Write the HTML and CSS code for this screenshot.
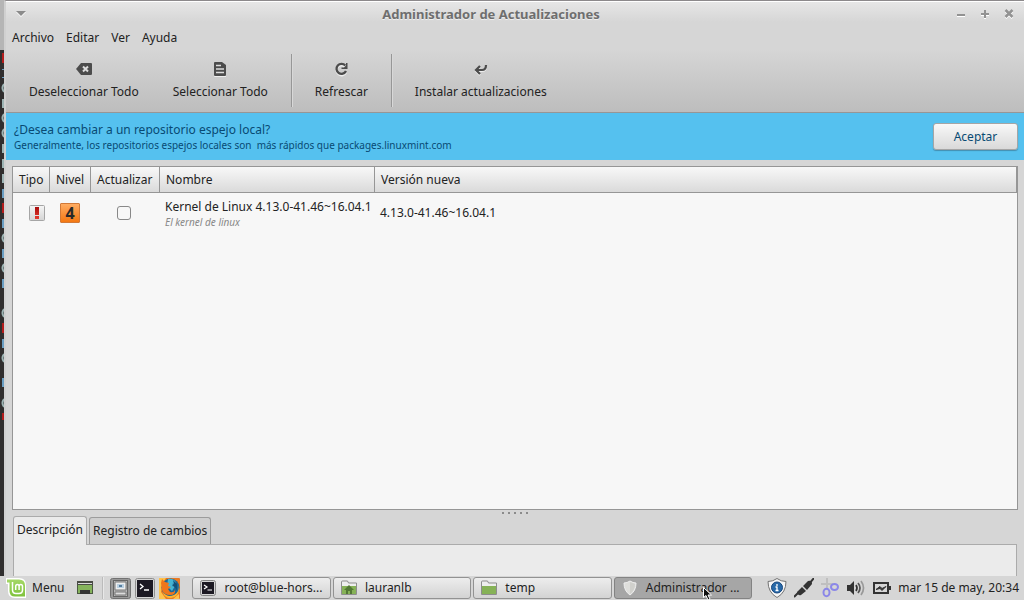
FILE: index.html
```html
<!DOCTYPE html>
<html lang="es">
<head>
<meta charset="utf-8">
<title>Administrador de Actualizaciones</title>
<link rel="stylesheet" href="styles.css">
</head>
<body>
<div class="desktop">
  <div class="behind" aria-hidden="true">
    <svg class="fragments" width="4" height="420" viewBox="0 0 4 420">
      <path d="M0 0h4v50H0z" fill="#b5b5b5"/>
      <path d="M2 53h2v10H2zM2 203h2v10H2zM2 323h2v10H2zM2 413h2v10H2z" fill="#b51d1d"/>
      <path d="M2 69h2v1H2zM2 77h2v1H2zM2 189h2v9H2zM2 219h2v9H2zM2 249h2v9H2zM2 279h2v9H2zM2 339h2v9H2zM2 378h2v9H2z" fill="#6b9fc4"/>
      <path d="M2 99h2v9H2zM2 144h2v9H2zM2 159h2v9H2zM2 174h2v9H2z" fill="#9eb5b5"/>
      <path d="M4 84q-3 4 0 8M4 114q-3 4 0 8M4 129q-3 4 0 8M4 234q-3 4 0 8M4 264q-3 4 0 8M4 309q-3 4 0 8M4 354q-3 4 0 8M4 399q-3 4 0 8" fill="none" stroke="#9eb5b5" stroke-width="2"/>
    </svg>
  </div>
  <main class="window">
    <header class="titlebar">
      <button class="tool-glyph" aria-label="Menú de ventana"><svg width="10" height="6"><path d="M0 1h10L5 6z" fill="#fff"/><path d="M0 0h10L5 5z" fill="#8b8b8b"/></svg></button>
      <h1 class="title">Administrador de Actualizaciones</h1>
      <div class="controls">
        <button class="tool-glyph" aria-label="Minimizar"><svg width="10" height="11"><path d="M1 8h8" stroke="#fff" stroke-width="2"/><path d="M1 7h8" stroke="#929292" stroke-width="2"/></svg></button>
        <button class="tool-glyph" aria-label="Maximizar"><svg width="10" height="11"><path d="M1 7h8M5 3v8" stroke="#fff" stroke-width="2"/><path d="M1 6h8M5 2v8" stroke="#929292" stroke-width="2"/></svg></button>
        <button class="tool-glyph" aria-label="Cerrar"><svg width="10" height="11"><path d="M1.500 3l7 7m0-7l-7 7" stroke="#fff" stroke-width="2.500"/><path d="M1.500 2l7 7m0-7l-7 7" stroke="#929292" stroke-width="2.500"/></svg></button>
      </div>
    </header>
    <nav class="menubar">
      <button class="menu-item">Archivo</button>
      <button class="menu-item">Editar</button>
      <button class="menu-item">Ver</button>
      <button class="menu-item">Ayuda</button>
    </nav>
    <div class="toolbar" role="toolbar">
      <button class="tool"><svg width="16" height="16"><path d="M6 3h9q1 0 1 1v9q0 1-1 1H6L0 8.500z" fill="#eee"/><path d="M5 2h10q1 0 1 1v10q0 1-1 1H5L0 8z" fill="#4c4c4c"/><path d="M7 5.500l5 5m0-5l-5 5" stroke="#ddd" stroke-width="2"/></svg>Deseleccionar Todo</button>
      <button class="tool"><svg width="16" height="16"><path d="M3 2h7l4 3v11H3q-1 0-1-1z" fill="#eee"/><path d="M3 1h7l4 3v10q0 1-1 1H3q-1 0-1-1V2q0-1 1-1z" fill="#4c4c4c"/><path d="M4 4.500h5M4 8h8M4 11.500h8" stroke="#ddd" stroke-width="1.500"/></svg>Seleccionar Todo</button>
      <span class="separator"></span>
      <button class="tool"><svg width="16" height="16"><path d="M12.300 5A5 5 0 1 0 13 10.500" transform="translate(0 1)" fill="none" stroke="#eee" stroke-width="2.200"/><path d="M12.300 4.500A5 5 0 1 0 13 10" fill="none" stroke="#4c4c4c" stroke-width="2.300"/><path d="M14.500 2v6H8.500v-1.500h2.500l2-2V2z" fill="#4c4c4c"/></svg>Refrescar</button>
      <span class="separator"></span>
      <button class="tool"><svg width="16" height="16"><path d="M3 10h6q4 0 4-5M7 6L3 10l4 4" fill="none" stroke="#eee" stroke-width="2.200"/><path d="M3 9h6q4 0 4-5M7 5L3 9l4 4" fill="none" stroke="#4c4c4c" stroke-width="2.200"/></svg>Instalar actualizaciones</button>
    </div>
    <section class="banner">
      <div>
        <p class="banner-title">¿Desea cambiar a un repositorio espejo local?</p>
        <p class="banner-text">Generalmente, los repositorios espejos locales son&nbsp; más rápidos que packages.linuxmint.com</p>
      </div>
      <button class="accept">Aceptar</button>
    </section>
    <section class="content">
      <div class="list">
        <table class="updates">
          <colgroup><col class="col-type"><col class="col-level"><col class="col-check"><col class="col-name"><col></colgroup>
          <thead><tr><th>Tipo</th><th>Nivel</th><th>Actualizar</th><th>Nombre</th><th>Versión nueva</th></tr></thead>
          <tbody><tr>
            <td class="icon-cell type-cell"><svg width="16" height="16" role="img" aria-label="Importante"><defs><linearGradient id="paper" x2="0" y2="1"><stop stop-color="#f6f6f6"/><stop offset="1" stop-color="#d4d4d4"/></linearGradient><linearGradient id="red" x2="0" y2="1"><stop stop-color="#a80d0d"/><stop offset="1" stop-color="#e63a2e"/></linearGradient></defs><rect x=".5" y=".5" width="15" height="15" rx="1" fill="url(#paper)" stroke="#a5a5a5"/><path d="M6 2h4v8H6zM6 11h4v3H6z" fill="url(#red)"/></svg></td>
            <td class="icon-cell"><span class="level">4</span></td>
            <td class="icon-cell check-cell"><input class="check" type="checkbox" aria-label="Actualizar Kernel de Linux"></td>
            <td class="name-cell"><div>Kernel de Linux 4.13.0-41.46~16.04.1</div><div class="summary">El kernel de linux</div></td>
            <td>4.13.0-41.46~16.04.1</td>
          </tr></tbody>
        </table>
      </div>
      <div class="grip" aria-hidden="true"><i></i><i></i><i></i><i></i><i></i></div>
      <div class="tabs" role="tablist">
        <button class="tab active" role="tab" aria-selected="true">Descripción</button>
        <button class="tab" role="tab">Registro de cambios</button>
      </div>
      <div class="panel" role="tabpanel"></div>
    </section>
  </main>
</div>
<footer class="taskbar">
  <button class="start"><svg width="20" height="20"><defs><linearGradient id="mint" x2="0" y2="1"><stop stop-color="#a5d867"/><stop offset="1" stop-color="#7fc23c"/></linearGradient></defs><path d="M0 0h13q7 0 7 7v13H9q-7 0-7-7V6H0z" fill="#fff"/><path d="M1 1.500h12q6 0 6 6V18.500H9q-5.500 0-5.500-5.500V4.500H1z" fill="url(#mint)"/><path d="M6.500 4v8q0 3.500 3.500 3.500h3q3.500 0 3.500-3.500V8.500q0-2-1.700-2t-1.700 2V12m0-3.500q0-2-1.700-2t-1.700 2V12" fill="none" stroke="#fff" stroke-width="1.500"/></svg>Menu</button>
  <button class="launch show-desktop" aria-label="Mostrar escritorio"><svg width="16" height="14"><rect x=".5" y=".5" width="15" height="12" fill="#85b35c" stroke="#4b5941"/><path d="M0 0h16v4H0z" fill="#4a4c46"/><path d="M1 2h14v1H1z" fill="#ddd"/><path d="M3 9h10v4H3z" fill="#333"/></svg></button>
  <span class="task-separator"></span>
  <div class="launchers">
    <button class="launch" aria-label="Archivos"><svg width="21" height="21"><rect x=".5" y=".5" width="20" height="20" rx="2" fill="#989898" stroke="#727272"/><rect x="3.500" y="2.500" width="14" height="16" fill="#b5b5b5" stroke="#666"/><path d="M5 4h11v8H5z" fill="#eee" stroke="#777"/><path d="M7 6h7v4H7z" fill="#b9cfe1"/><path d="M5 14h11v3H5z" fill="#ddd" stroke="#777"/><path d="M9 7h3v2H9z" fill="#567d9c"/></svg></button>
    <button class="launch" aria-label="Terminal"><svg width="20" height="21"><rect x=".5" y=".5" width="19" height="20" rx="2" fill="#d5d5d5" stroke="#8f8f8f"/><rect x="2" y="2" width="16" height="17" fill="#1c1923"/><path d="M5 6l3 2.500L5 11M9 12h5" fill="none" stroke="#fff" stroke-width="1.300"/></svg></button>
    <button class="launch" aria-label="Firefox"><svg width="21" height="21"><rect width="21" height="21" rx="1" fill="#e87a24"/><path d="M0 0h7L3 6l-1 8 5 7H0zM14 21l6-5v5z" fill="#ffc34b"/><circle cx="11.500" cy="9.500" r="9" fill="#1d6796"/><path d="M9 1q6-1 8 4l-4 1 3 2-3 5-5-5z" fill="#45b4d3"/><path d="M2 5l1-4 3 3 4 1-1 3 3 1-3 2 2 3q4 1 5-2 1 5-5 5-6 0-8-5z" fill="#ef761c"/><path d="M19 4q3 9-4 13-7 3-11-3 1 6 8 6 9-1 8-12z" fill="#ffb52c"/><path d="M14 2l4 4v7q-2-5-5-5l2-2z" fill="#135179"/></svg></button>
  </div>
  <div class="tasks">
    <button class="task"><svg width="16" height="16"><rect x=".5" y=".5" width="15" height="15" rx="2" fill="#d5d5d5" stroke="#858585"/><path d="M2 2h12v12H2z" fill="#1c1923"/><path d="M4 5l3 2-3 2M7.500 10H12" fill="none" stroke="#fff" stroke-width="1.200"/></svg><span>root@blue-hors...</span></button>
    <button class="task"><svg width="16" height="16"><path d="M.500 14.500V2q0-1 1-1h5l1 2h8v11.500z" fill="#eee" stroke="#8d8d8d"/><path d="M1 6h14v8H1z" fill="#86b257"/><path d="M8 5l5 5h-2v4H9v-3H7v3H5v-4H3z" fill="#527835"/></svg><span>lauranlb</span></button>
    <button class="task"><svg width="16" height="16"><path d="M.500 14.500V2q0-1 1-1h5l1 2h8v11.500z" fill="#eee" stroke="#8d8d8d"/><path d="M1 6h14v8H1z" fill="#86b257"/></svg><span>temp</span></button>
    <button class="task current"><svg width="16" height="16"><path d="M8 1q3 2 6 2 0 8-6 12-6-4-6-12 3 0 6-2z" fill="#dededb" stroke="#eee"/><path d="M8 2q3 1 5 2 0 6-5 10z" fill="#d0d0cc"/></svg><span>Administrador ...</span>
      <svg class="pointer" width="10" height="14" aria-hidden="true"><path d="M.500.500v10l2.500-2 2 4.500 2-1-2-4h3.500z" fill="#111" stroke="#fff"/></svg></button>
  </div>
  <div class="tray">
    <svg width="20" height="20"><path d="M10 .500q4 3 9 3 0 11-9 16-9-5-9-16 5 0 9-3z" fill="#f5f5f5" stroke="#747474"/><circle cx="10" cy="9.500" r="5.500" fill="#2869a8" stroke="#17477f"/><path d="M10 6v2M10 9v4M8.500 12.500h3M8.500 9h2" stroke="#fff" stroke-width="1.300"/></svg>
    <svg width="20" height="20"><path d="M0 19l5-5M15 6l5-6" stroke="#333" stroke-width="2"/><path d="M3 14l5-5 4 4-5 4q-3 1-4-3zM9 8l5-5q4-1 4 3l-5 6z" fill="#333"/></svg>
    <svg width="18" height="20"><path d="M6 0v12M0 6h12" stroke="#bfbfbf" stroke-width="2"/><ellipse cx="5.500" cy="14.500" rx="3" ry="3.800" fill="none" stroke="#8b87e8" stroke-width="2"/><ellipse cx="13.500" cy="9" rx="3.500" ry="3" fill="none" stroke="#8b87e8" stroke-width="2"/></svg>
    <svg width="20" height="18"><path d="M1 6h3l4-4v14l-4-4H1z" fill="#333"/><path d="M10 6q2 3 0 6" fill="none" stroke="#333" stroke-width="1.700"/><path d="M12 4q4 5 0 10" fill="none" stroke="#555" stroke-width="1.700"/><path d="M15 2q5 7 0 14" fill="none" stroke="#999" stroke-width="1.700"/></svg>
    <svg width="18" height="14"><rect x="1" y="2" width="14" height="10" fill="none" stroke="#333" stroke-width="2"/><path d="M16 5h2v4h-2z" fill="#333"/><path d="M3 8.500l4-3 2 2 4-2-4 4-2-2z" fill="#333" stroke="#333"/></svg>
    <time class="clock">mar 15 de may, 20:34</time>
  </div>
</footer>
</body>
</html>
```
FILE: styles.css
```css
* { box-sizing: border-box; }
body {
  margin: 0;
  height: 100vh;
  display: flex;
  flex-direction: column;
  overflow: hidden;
  background: #d6d6d6;
  color: #222;
  font: 12px/16px "Noto Sans", sans-serif;
}
button { font: inherit; color: inherit; border: 0; background: none; padding: 0; }
svg { display: block; flex: none; }
p, h1 { margin: 0; }
.desktop { flex: 1; min-height: 0; display: flex; }
.behind { width: 4px; background: #302e2e; overflow: hidden; }
.window {
  flex: 1;
  min-width: 0;
  display: flex;
  flex-direction: column;
  border-top: 1px solid #8c898b;
  border-left: 2px solid #d0d0d0;
  background: #d6d6d6;
}
.titlebar {
  height: 26px;
  display: flex;
  align-items: center;
  justify-content: space-between;
  padding: 0 10px 2px;
  border-top: 1px solid #fff;
  background: linear-gradient(#e6e6e6, #d6d6d6 80%);
}
.title { font-size: 13px; line-height: 18px; font-weight: 700; color: #6e6e6e; text-shadow: 0 1px #eee; }
.controls { display: flex; gap: 14px; }
.menubar { height: 22px; display: flex; align-items: center; gap: 12px; padding: 0 6px; }
.toolbar {
  height: 64px;
  display: flex;
  align-items: center;
  padding: 0 6px;
  border-bottom: 1px solid #969696;
  background: linear-gradient(#d6d6d6, #bdbdbd);
}
.tool { display: flex; flex-direction: column; align-items: center; gap: 7px; padding: 0 17px 1px; }
.separator { width: 2px; height: 53px; margin: 0 6px; background: #979797; border-right: 1px solid #d8d8d8; }
.toolbar .tool + .separator { margin-right: 5px; }
.banner {
  height: 47px;
  display: flex;
  align-items: center;
  justify-content: space-between;
  padding: 0 6px 0 8px;
  background: #55c1ef;
  color: #084a73;
}
.banner-title { padding-top: 1px; }
.banner-text { font-size: 10px; line-height: 15px; }
.accept {
  width: 85px;
  height: 27px;
  border: 1px solid #a5a5a5;
  border-radius: 3px;
  background: linear-gradient(#f8f8f8, #d9d9d9);
  box-shadow: 0 1px 1px #448eb0;
}
.content { flex: 1; min-height: 0; display: flex; flex-direction: column; padding: 6px 6px 0; }
.list { flex: 1; min-height: 0; border: 1px solid #969696; background: #f7f7f7; }
.updates { width: 100%; table-layout: fixed; border-collapse: separate; border-spacing: 0; }
.col-type { width: 37px; }
.col-level { width: 41px; }
.col-check { width: 69px; }
.col-name { width: 215px; }
th {
  height: 26px;
  padding: 0 6px;
  text-align: left;
  font-weight: 400;
  white-space: nowrap;
  border-right: 1px solid #969696;
  border-bottom: 1px solid #969696;
  background: linear-gradient(#f8f8f8, #dadada);
}
td { height: 39px; padding: 0 5px; white-space: nowrap; }
.name-cell { padding-top: 2px; }
.icon-cell { padding: 0 10px; }
.icon-cell svg, .check { margin: 0 auto; }
.type-cell { padding: 0 0 0 11px; }
.check-cell { padding: 0 12px 0 9px; }
.level {
  display: block;
  width: 20px;
  height: 20px;
  border: 1px solid #d27937;
  border-radius: 1px;
  background: linear-gradient(#ffac62, #f47812);
  color: #292929;
  font-size: 16px;
  line-height: 18px;
  font-weight: 700;
  text-align: center;
}
.check { display: block; width: 14px; height: 14px; appearance: none; border: 1px solid #888; border-radius: 3px; background: #f7f7f7; }
.summary { font-size: 10px; line-height: 14px; font-style: italic; color: #888; }
.grip { height: 6px; display: flex; align-items: center; justify-content: center; gap: 4px; }
.grip i { width: 2px; height: 2px; background: #8b8b8b; }
.tabs { display: flex; align-items: flex-end; gap: 2px; height: 28px; padding-left: 1px; }
.tab { height: 27px; padding: 0 3px; border: 1px solid #9c9c9c; border-bottom: 0; border-radius: 3px 3px 0 0; background: #cfcfcf; }
.tab.active { height: 29px; align-self: flex-start; padding-bottom: 2px; background: #ebebeb; border-color: #ababab; z-index: 1; }
.panel { height: 32px; margin: 0 1px; border: 1px solid #ababab; border-bottom: 0; background: #ebebeb; }
.taskbar { height: 24px; display: flex; align-items: center; background: #d6d6d6; }
.start { display: flex; align-items: center; gap: 6px; padding-left: 6px; }
.show-desktop { margin-left: 13px; }
.task-separator { width: 2px; height: 22px; margin: 0 6px 0 9px; border-left: 1px solid #bbb; border-right: 1px solid #e8e8e8; }
.launchers { display: flex; gap: 4px; }
.tasks { flex: 1; min-width: 0; display: flex; gap: 2px; margin: 0 15px 0 12px; }
.task {
  position: relative;
  flex: 1;
  min-width: 0;
  height: 22px;
  display: flex;
  align-items: center;
  gap: 8px;
  padding: 0 7px;
  border: 1px solid #929292;
  border-radius: 3px;
  background: linear-gradient(#ededed, #d3d3d3);
  white-space: nowrap;
}
.task.current { background: #a6a6a6; border-color: #838383; }
.pointer { position: absolute; left: 88px; top: 9px; }
.tray { display: flex; align-items: center; gap: 7px; padding-right: 5px; }
.clock { white-space: nowrap; }
```
